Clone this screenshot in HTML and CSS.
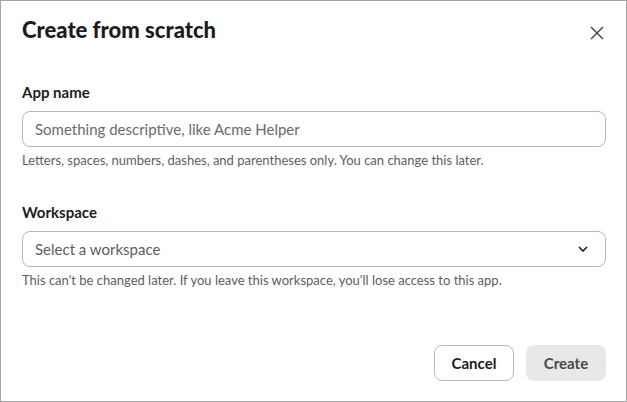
FILE: index.html
```html
<!DOCTYPE html>
<html lang="en">
<head>
    <meta charset="UTF-8">
    <title>Create from scratch</title>
    <link rel="stylesheet" href="styles.css">
</head>
<body>
    <div class="modal">
        <!-- Header with title and close button -->
        <div class="modal-header">
            <h1>Create from scratch</h1>
            <button class="close-btn" aria-label="Close">
                <svg width="14" height="14" viewBox="0 0 14 14">
                    <path d="M1 1 L13 13 M13 1 L1 13" stroke="#4a4a4a" stroke-width="1.5" fill="none"/>
                </svg>
            </button>
        </div>

        <div class="modal-body">
            <div class="field">
                <label for="app_name">App name</label>
                <input type="text" id="app_name" placeholder="Something descriptive, like Acme Helper">
                <p class="hint">Letters, spaces, numbers, dashes, and parentheses only. You can change this later.</p>
            </div>

            <div class="field">
                <label>Workspace</label>
                <div class="select">
                    <span>Select a workspace</span>
                    <svg width="10" height="6" viewBox="0 0 10 6">
                        <path d="M1 1 L5 5 L9 1" stroke="#1d1c1d" stroke-width="1.6" fill="none"/>
                    </svg>
                </div>
                <p class="hint">This can't be changed later. If you leave this workspace, you'll lose access to this app.</p>
            </div>
        </div>

        <!-- Footer buttons -->
        <div class="modal-footer">
            <button class="btn btn-cancel">Cancel</button>
            <button class="btn btn-create">Create</button>
        </div>
    </div>
</body>
</html>
```

FILE: styles.css
```css
/* General reset */
* {
    margin: 0;
    padding: 0;
    box-sizing: border-box;
}

body {
    font-family: 'Lato', 'Liberation Sans', sans-serif;
    background-color: #FFFFFF;
    color: #1D1C1D;
}

/* Modal frame */
.modal {
    width: 627px;
    height: 402px;
    border: 1px solid #A5A5A5;
    display: flex;
    flex-direction: column;
}

/* Header */
.modal-header {
    display: flex;
    justify-content: space-between;
    align-items: center;
    padding: 8px 11px 0 21px;
}

h1 {
    font-size: 22px;
    font-weight: 900;
    line-height: 28px;
}

.close-btn {
    border: none;
    background: none;
    width: 36px;
    height: 36px;
    display: flex;
    align-items: center;
    justify-content: center;
    margin-top: 6px;
}

/* Form fields */
.modal-body {
    padding: 30px 20px 0 21px;
}

.field {
    margin-bottom: 32px;
}

label {
    display: block;
    font-size: 15px;
    font-weight: 700;
    line-height: 22px;
    margin-bottom: 8px;
}

input[type="text"], .select {
    width: 100%;
    height: 36px;
    border: 1px solid #B8B8B8;
    border-radius: 8px;
    padding: 0 12px;
    font-family: inherit;
    font-size: 15px;
    color: #1D1C1D;
    outline: none;
}

input::placeholder {
    color: #6B6A6B;
}

.select {
    display: flex;
    align-items: center;
    justify-content: space-between;
    color: #5E5D5E;
    padding-right: 17px;
}

.hint {
    font-size: 13px;
    line-height: 18px;
    color: #5E5D5E;
    margin-top: 4px;
}

/* Footer */
.modal-footer {
    margin-top: auto;
    display: flex;
    justify-content: flex-end;
    gap: 12px;
    padding: 0 20px 20px;
}

.btn {
    height: 36px;
    padding: 0 16px;
    border-radius: 8px;
    font-family: inherit;
    font-size: 15px;
    font-weight: 700;
    cursor: pointer;
}

.btn-cancel {
    background: #FFFFFF;
    border: 1px solid #B8B8B8;
    color: #1D1C1D;
    width: 80px;
}

.btn-create {
    background: #E8E8E8;
    border: none;
    color: #4A4A4A;
    width: 80px;
}
```
